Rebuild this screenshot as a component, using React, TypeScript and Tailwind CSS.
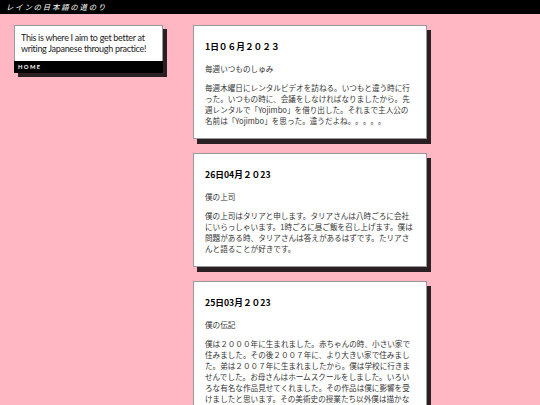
import React from "react";

interface Post {
  date: string;
  title: string;
  body: string;
}

const POSTS: Post[] = [
  {
    date: "1日０６月２０２３",
    title: "毎週いつものしゅみ",
    body: "毎週木曜日にレンタルビデオを訪ねる。いつもと違う時に行った。いつもの時に、会議をしなければなりましたから。先週レンタルで「Yojimbo」を借り出した。それまで主人公の名前は「Yojimbo」を思った。違うだよね。。。。。",
  },
  {
    date: "26日04月２０23",
    title: "僕の上司",
    body: "僕の上司はタリアと申します。タリアさんは八時ごろに会社にいらっしゃいます。1時ごろに昼ご飯を召し上げます。僕は問題がある時、タリアさんは答えがあるはずです。たリアさんと語ることが好きです。",
  },
  {
    date: "25日03月２０23",
    title: "僕の伝記",
    body: "僕は２０００年に生まれました。赤ちゃんの時、小さい家で住みました。その後２００７年に、より大きい家で住みました。弟は２００７年に生まれましたから。僕は学校に行きませんでした。お母さんはホームスクールをしました。いろいろな有名な作品見せてくれました。その作品は僕に影響を受けましたと思います。その美術史の授業たち以外僕は描かなくてもいい画家はどこでも描きました。それから僕は毎日絵を描きました。",
  },
];

const jp = "font-['Noto_Sans_CJK_JP','Noto_Sans',sans-serif]";

function PostCard({ post }: { post: Post }) {
  return (
    <div className="bg-white border border-[#9a9a9a] shadow-[4px_5px_0_#2a2024] px-[11px] pt-[14px] pb-[12px] [text-spacing-trim:space-all]">
      <h3 className="text-[8.7px] leading-[14px] font-bold text-black">{post.date}</h3>
      <p className="mt-[9px] text-[7.6px] leading-[11px] text-[#333]">{post.title}</p>
      <p className="mt-[8px] text-[7.6px] leading-[11px] text-[#333]">{post.body}</p>
    </div>
  );
}

export default function App() {
  return (
    <div className={`w-[540px] h-[405px] overflow-hidden bg-[#ffb7c3] ${jp}`}>
      {/* Top bar */}
      <div className="h-[14px] bg-black flex items-center pl-[6px]">
        <span className="text-white italic text-[7.4px] leading-none tracking-[1.8px]">
          レインの日本語の道のり
        </span>
      </div>

      <div className="flex items-start pl-[14px] pt-[11px] gap-[30px]">
        {/* Sidebar */}
        <div className="w-[149px] shadow-[4px_4px_0_#2a2024]">
          <div className="bg-white border border-[#9a9a9a] border-b-0 px-[6px] pt-[5.5px] pb-[6px]">
            <p className="font-['Lato','Noto_Sans',sans-serif] text-[9px] tracking-[-0.3px] leading-[11.6px] text-[#222]">
              This is where I aim to get better at writing Japanese through practice!
            </p>
          </div>
          <div className="bg-black h-[12px] flex items-center pl-[4px]">
            <span className="font-['Lato',sans-serif] text-white text-[5.8px] font-bold tracking-[1.4px] leading-none">
              HOME
            </span>
          </div>
        </div>

        {/* Posts */}
        <div className="w-[234px] flex flex-col gap-[14px]">
          {POSTS.map((p) => (
            <PostCard key={p.date} post={p} />
          ))}
        </div>
      </div>
    </div>
  );
}
